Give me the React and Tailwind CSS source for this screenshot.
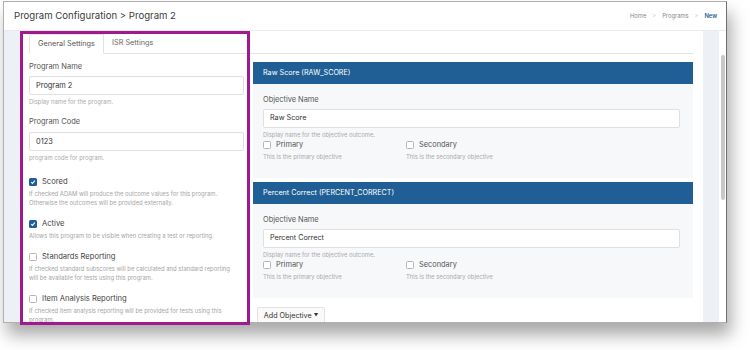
import React from "react";

const F = { fontFamily: "Inter, 'Open Sans', sans-serif" };

function Check({ checked }) {
  return checked ? (
    <span className="inline-flex h-[8px] w-[8px] shrink-0 items-center justify-center rounded-[1.5px] bg-[#1f5f99]">
      <svg width="6" height="6" viewBox="0 0 10 10">
        <path d="M2 5.2 L4.2 7.3 L8 2.8" stroke="white" strokeWidth="1.8" fill="none" />
      </svg>
    </span>
  ) : (
    <span className="inline-block h-[8px] w-[8px] shrink-0 rounded-[1.5px] border border-[#b5b5b5] bg-white" />
  );
}

function CheckRow({ checked, label, help }) {
  return (
    <div className="flex flex-col">
      <div className="flex h-[9px] items-center gap-[5px]">
        <Check checked={checked} />
        <span className="text-[7.6px] leading-[9px] text-[#444]">{label}</span>
      </div>
      <div className="mt-[3px] whitespace-nowrap text-[5.9px] leading-[9px] text-[#a5a5a5]">{help}</div>
    </div>
  );
}

function Objective({ title, value }) {
  return (
    <div className="flex shrink-0 flex-col">
      <div className="flex h-[22px] items-center bg-[#1f5f96] pl-[10px] text-[7.2px] text-white">{title}</div>
      <div className="flex h-[94px] flex-col bg-[#f7f8fa] px-[10px] pt-[11px]">
        <div className="h-[10px] text-[7.4px] leading-[10px] text-[#555]">Objective Name</div>
        <div className="mt-[4px] flex h-[19px] w-[417px] items-center rounded-[2px] border border-[#e0e0e0] bg-white pl-[6px] text-[7.2px] text-[#333]">
          {value}
        </div>
        <div className="mt-[3px] h-[7px] text-[5.9px] leading-[7px] text-[#aaa]">Display name for the objective outcome.</div>
        <div className="mt-[2px] flex">
          <div className="flex w-[143px] flex-col">
            <div className="flex h-[9px] items-center gap-[5px]">
              <Check />
              <span className="text-[7.4px] text-[#555]">Primary</span>
            </div>
            <div className="mt-[4px] text-[5.9px] text-[#aaa]">This is the primary objective</div>
          </div>
          <div className="flex flex-col">
            <div className="flex h-[9px] items-center gap-[5px]">
              <Check />
              <span className="text-[7.4px] text-[#555]">Secondary</span>
            </div>
            <div className="mt-[4px] text-[5.9px] text-[#aaa]">This is the secondary objective</div>
          </div>
        </div>
      </div>
    </div>
  );
}

export default function App() {
  return (
    <div className="relative h-[350px] w-[750px] overflow-hidden bg-white" style={F}>
      <div className="ml-[3px] mt-[1px] flex h-[322px] w-[724px] flex-col overflow-hidden border border-[#b0b0b0] border-r-[#707070] bg-white shadow-[4px_12px_16px_rgba(0,0,0,0.34)]">
        {/* header */}
        <div className="flex h-[29px] shrink-0 items-center justify-between border-b border-[#ebebeb] pl-[10px] pr-[9px]">
          <div className="text-[9.6px] text-[#3a3a3a]">Program Configuration &gt; Program 2</div>
          <div className="flex items-center gap-[6px] text-[5.8px] text-[#888]">
            <span>Home</span>
            <span className="text-[#ccc]">&gt;</span>
            <span>Programs</span>
            <span className="text-[#ccc]">&gt;</span>
            <span className="font-semibold text-[#1f5f99]">New</span>
          </div>
        </div>
        {/* body */}
        <div className="flex min-h-0 flex-1 bg-[#edf0f4]">
          <div className="w-[17px] shrink-0" />
          <div className="flex w-[682px] shrink-0 flex-col bg-white">
            <div className="ml-[8px] mr-[10px] mt-[3px] flex h-[20px] shrink-0 items-end border-b border-[#e3e3e3]">
              <div className="-mb-px flex h-[20px] w-[75px] items-center justify-center border border-b-white border-[#e3e3e3] bg-white text-[7.3px] text-[#555]">
                General Settings
              </div>
              <div className="flex h-[20px] items-center pl-[8px] text-[7.3px] text-[#666]">ISR Settings</div>
            </div>
            <div className="flex">
              {/* left form */}
              <div className="flex w-[232px] flex-col pl-[8px] pr-[9px]">
                <div className="mt-[8px] h-[10px] text-[7.5px] leading-[10px] text-[#555]">Program Name</div>
                <div className="mt-[4px] flex h-[19px] items-center rounded-[2px] border border-[#e0e0e0] pl-[6px] text-[7.4px] text-[#333]">
                  Program 2
                </div>
                <div className="mt-[3px] h-[7px] text-[5.9px] leading-[7px] text-[#aaa]">Display name for the program.</div>
                <div className="mt-[12px] h-[10px] text-[7.5px] leading-[10px] text-[#555]">Program Code</div>
                <div className="mt-[5px] flex h-[19px] items-center rounded-[2px] border border-[#e0e0e0] pl-[6px] text-[7.4px] text-[#333]">
                  0123
                </div>
                <div className="mt-[3px] h-[7px] text-[5.9px] leading-[7px] text-[#aaa]">program code for program.</div>
                <div className="mt-[16px] flex flex-col gap-[12px]">
                  <CheckRow
                    checked
                    label="Scored"
                    help={<>If checked ADAM will produce the outcome values for this program.<br />Otherwise the outcomes will be provided externally.</>}
                  />
                  <CheckRow checked label="Active" help="Allows this program to be visible when creating a test or reporting." />
                  <CheckRow
                    label="Standards Reporting"
                    help={<>If checked standard subscores will be calculated and standard reporting<br />will be available for tests using this program.</>}
                  />
                  <CheckRow
                    label="Item Analysis Reporting"
                    help={<>If checked item analysis reporting will be provided for tests using this<br />program.</>}
                  />
                </div>
              </div>
              {/* right objectives */}
              <div className="flex flex-1 flex-col pr-[10px] pt-[8px]">
                <Objective title="Raw Score (RAW_SCORE)" value="Raw Score" />
                <div className="h-[4px] shrink-0" />
                <Objective title="Percent Correct (PERCENT_CORRECT)" value="Percent Correct" />
                <div className="mt-[9px] ml-[4px] flex h-[18px] w-[68px] shrink-0 items-center justify-center rounded-[2px] border border-[#e3e3e3] bg-[#fafafa] text-[7.2px] text-[#333]">
                  Add Objective
                  <span className="ml-[2px] text-[4.5px]">▼</span>
                </div>
              </div>
            </div>
          </div>
          <div className="w-[16px] shrink-0" />
          <div className="flex w-[8px] shrink-0 justify-center bg-white pt-[24px]">
            <div className="h-[145px] w-[4px] rounded-full bg-[#c8c8c8]" />
          </div>
        </div>
      </div>
      {/* annotation highlight */}
      <div className="absolute left-[20px] top-[31px] h-[294px] w-[230px] border-[3px] border-[#a0198f]" />
    </div>
  );
}
